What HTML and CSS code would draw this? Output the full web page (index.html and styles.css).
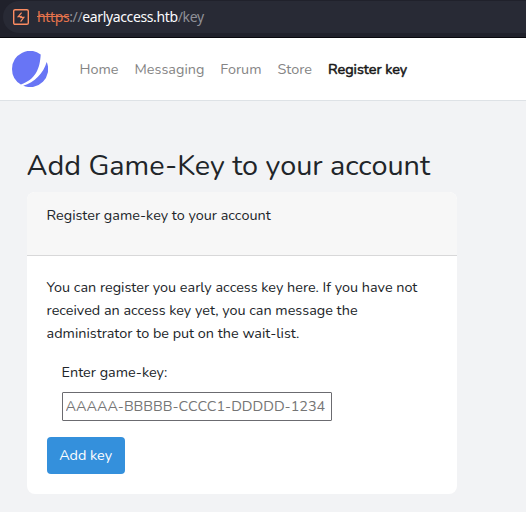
FILE: index.html
```html
<!DOCTYPE html>
<html lang="en">
<head>
<meta charset="utf-8">
<title>Register key</title>
<link rel="stylesheet" href="styles.css">
</head>
<body>
<div class="browser-bar">
  <div class="address">
    <svg class="address-icon" viewBox="0 0 16 16" aria-hidden="true">
      <rect x=".7" y=".7" width="14.6" height="14.6" rx="1.4"/>
      <path d="M8.6 3.6 5.2 7.6H7.8V9.2M8.2 6.8V8.4H10.8L7.6 12.6"/>
    </svg>
    <span class="url"><s>https</s>://<b>earlyaccess.htb</b>/key</span>
  </div>
</div>
<header class="navbar">
  <svg class="logo" viewBox="0 0 36 36" aria-hidden="true">
    <path d="M8.9 33.5A18 18 0 0 1 0 18A18 18 0 0 1 28.7 3.5C28 17.5 23.5 28.5 8.9 33.5Z"/>
    <path d="M11.2 34.7C22.5 31.5 31.5 22 34.7 11A18 18 0 0 1 11.2 34.7Z"/>
  </svg>
  <nav class="links">
    <a>Home</a>
    <a>Messaging</a>
    <a>Forum</a>
    <a>Store</a>
    <a class="active">Register key</a>
  </nav>
</header>
<main>
  <h1>Add Game-Key to your account</h1>
  <section class="card">
    <div class="card-header">Register game-key to your account</div>
    <form class="card-body">
      <p>You can register you early access key here. If you have not<br>received an access key yet, you can message the<br>administrator to be put on the wait-list.</p>
      <div class="field">
        <label for="key">Enter game-key:</label>
        <input id="key" type="text" placeholder="AAAAA-BBBBB-CCCC1-DDDDD-1234">
      </div>
      <button type="button">Add key</button>
    </form>
  </section>
</main>
</body>
</html>
```
FILE: styles.css
```css
* { box-sizing: border-box; }
body {
  margin: 0;
  height: 512px;
  overflow: hidden;
  background: #f2f3f5;
  color: #212529;
  font: 14.4px/23px Nunito, Lato, sans-serif;
}
.browser-bar {
  height: 38px;
  padding: 1px 0 0 3px;
  background: #20212b;
  border-bottom: 1px solid #08080d;
}
.address {
  display: flex;
  align-items: center;
  gap: 8px;
  width: 540px;
  height: 32px;
  padding-left: 10px;
  border-radius: 16px;
  background: #282a35;
}
.address-icon { width: 16px; height: 16px; fill: none; stroke: #fb8b61; stroke-width: 1.4; }
.address-icon path { stroke-width: 1.2; }
.url { font: 14px/20px "Noto Sans", sans-serif; letter-spacing: -.37px; color: #8f9097; white-space: nowrap; }
.url s { color: #e5734c; }
.url b { font-weight: 400; color: #fbfbfe; }
.navbar {
  display: flex;
  align-items: center;
  height: 63px;
  padding-left: 12px;
  background: #fff;
  border-bottom: 1px solid #dee2e6;
}
.logo { width: 36px; height: 36px; fill: #6875f5; }
.links { display: flex; gap: 16px; margin-left: 31.6px; color: #858585; }
.links .active { color: #1a1a1a; -webkit-text-stroke: .55px #1a1a1a; }
main { padding: 47px 0 0 26.6px; }
h1 { margin: 0 0 9px; font-size: 28.8px; line-height: 35px; font-weight: 400; white-space: nowrap; }
.card { width: 430px; height: 302px; border-radius: 8px; background: #fff; }
.card-header {
  height: 64px;
  padding: 12px 20px;
  background: #f7f7f7;
  border-bottom: 1px solid #d8d8d9;
  border-radius: 8px 8px 0 0;
}
.card-body { padding: 20px; }
p { margin: 0 0 16px; white-space: nowrap; }
.field { display: flex; flex-direction: column; padding-left: 15px; }
label { margin-bottom: 8px; }
input {
  width: 270px;
  height: 29px;
  margin: 0;
  padding: 0 3px 2px;
  border: 1px solid #6b6b70;
  border-radius: 1px;
  background: #fff;
  font: inherit;
}
input::placeholder { color: #757575; opacity: 1; }
button {
  width: 78px;
  height: 37px;
  margin-top: 16px;
  padding: 0;
  border: 0;
  border-radius: 4px;
  background: #3490dc;
  color: #fff;
  font: inherit;
}
```
